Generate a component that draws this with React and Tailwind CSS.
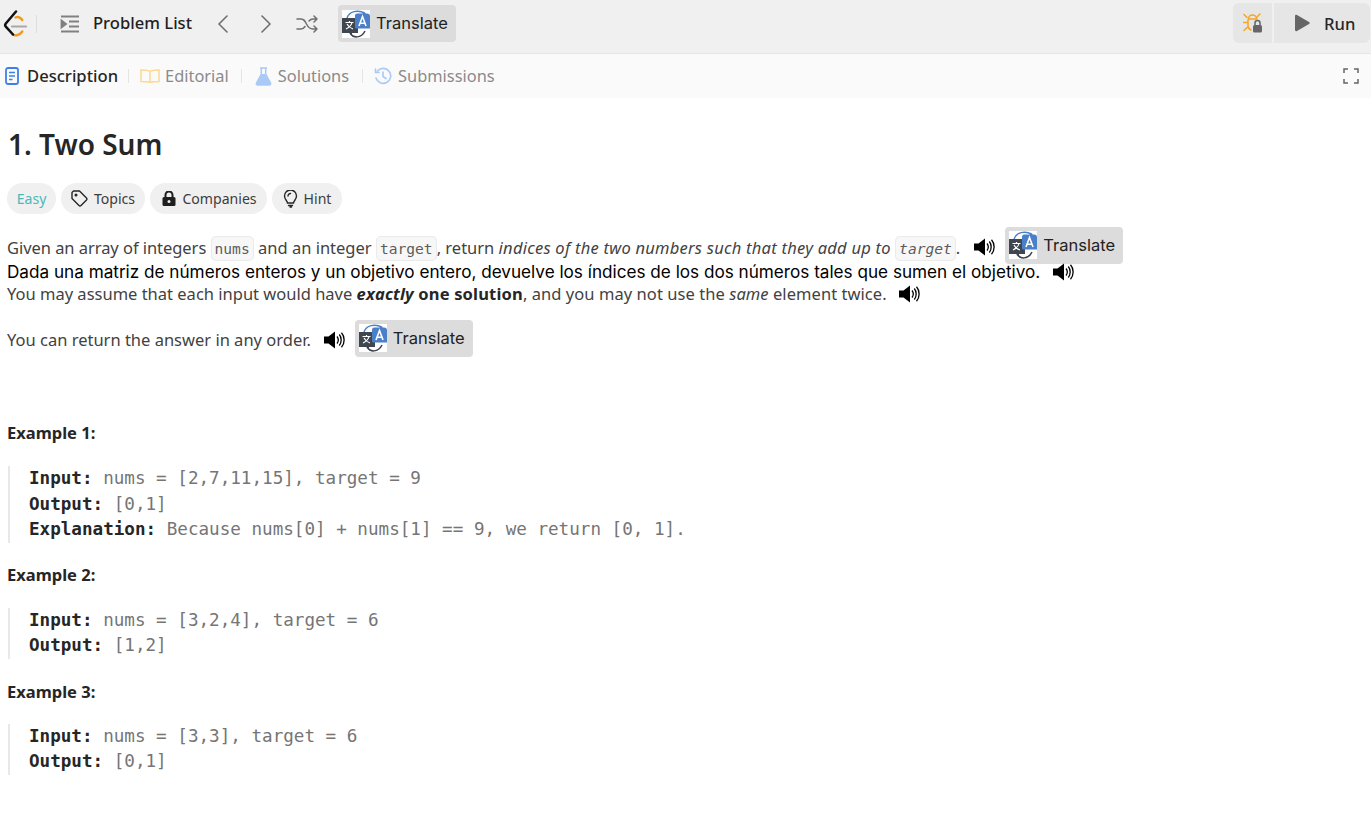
import React from "react";

const sans = "font-['Noto_Sans','Open_Sans',sans-serif]";
const inter = "font-['Inter',sans-serif]";

function TranslateIcon() {
  return (
    <svg width="28" height="28" viewBox="0 0 28 28" className="shrink-0">
      <rect width="28" height="28" fill="#fff" />
      <path d="M5 8C7 1.500 16 -1 23 3.500" fill="none" stroke="#4a7fc9" strokeWidth="1.500" />
      <path d="M21.500 1.500 24 4l-3.500.5z" fill="#4a7fc9" />
      <path d="M8 23c3 5 11 6 15-2" fill="none" stroke="#3a4049" strokeWidth="1.500" />
      <path d="M6.500 22 9.500 25l1-3.500z" fill="#3a4049" />
      <rect x="0" y="8" width="16" height="15" fill="#3f4650" />
      <path d="M15 3.500h10c2 0 3 1 3 3v12H14c-1 0-1-1-1-2V5.500c0-1 1-2 2-2z" fill="#4a7fc9" />
      <path d="M3.500 12.500h8M7.500 11v1.500M10 12.500c-.5 2.500-3 5-6 6.500M5 14c1 2 3 4 6 5" fill="none" stroke="#fff" strokeWidth="1.200" />
      <path d="M17 16 20.500 6.500 24 16M18 13.200h5" fill="none" stroke="#fff" strokeWidth="1.600" />
    </svg>
  );
}

function Translate() {
  return (
    <span className={`inline-flex h-[37px] items-center gap-[6px] rounded-[4px] bg-[#dcdcdc] pl-[4px] pr-[8px] text-[16.500px] text-[#222] ${inter}`}>
      <TranslateIcon />
      <span>Translate</span>
    </span>
  );
}

function Speaker({ className = "" }) {
  return (
    <svg width="22" height="18" viewBox="0 0 22 18" className={`inline-block shrink-0 ${className}`}>
      <path d="M1 5.500h4.500L12 .5v17l-6.500-5H1z" fill="#000" />
      <path d="M14 5.500c1.500 2 1.500 5 0 7M16.300 3.500c2.500 3 2.500 8 0 11M18.500 1.800c3.500 4 3.500 10.400 0 14.400" fill="none" stroke="#000" strokeWidth="1.300" />
    </svg>
  );
}

function Code({ children, italic }) {
  return (
    <code className={`rounded-[5px] border border-[#ebebeb] bg-[#f7f7f7] px-[3px] py-[3px] font-['DejaVu_Sans_Mono',monospace] text-[14.600px] text-[#5c5c5c] ${italic ? "italic" : ""}`}>
      {children}
    </code>
  );
}

function Tag({ children, className = "" }) {
  return (
    <span className={`flex h-[31px] items-center gap-[6px] rounded-full bg-[#f0f0f0] text-[14.100px] text-[#3d3d3d] ${className}`}>
      {children}
    </span>
  );
}

function Sep() {
  return <span className="block h-[14px] w-px bg-[#e4e4e4]" />;
}

function Pre({ lines }) {
  return (
    <div className="border-l-2 border-[#e8e8e8] pl-[19px] font-['DejaVu_Sans_Mono',monospace] text-[17.600px] leading-[25.500px] text-[#757575]">
      {lines.map(([k, v]) => (
        <div key={k} className="whitespace-pre">
          <b className="font-bold text-[#262626]">{k}</b> {v}
        </div>
      ))}
    </div>
  );
}

function ExampleTitle({ children, className = "" }) {
  return <h3 className={`-ml-[1px] text-[16.500px] font-bold leading-[24px] text-[#262626] ${className}`}>{children}</h3>;
}

export default function App() {
  return (
    <div className={`h-[819px] w-[1371px] overflow-hidden bg-white ${sans}`}>
      <header className="flex h-[54px] items-center border-b border-[#e6e6e6] bg-[#f0f0f0] pb-[6px] pr-[1px]">
        <svg width="26" height="28" viewBox="0 0 26 28" className="ml-[3px]">
          <path d="M9 16.500H23" stroke="#a8a8a8" strokeWidth="2.200" strokeLinecap="round" />
          <path d="M12.500 7.500c3-1.500 5 0 6.800 2.500" fill="none" stroke="#f09a20" strokeWidth="2.400" strokeLinecap="round" />
          <path d="M9.500 24.500c3 1.500 7 1 9.800-3" fill="none" stroke="#f09a20" strokeWidth="2.400" strokeLinecap="round" />
          <path d="M13 1.500 2.800 13.500c-.8 1-.8 2.200 0 3.200L10 24.500" fill="none" stroke="#111" strokeWidth="2.500" strokeLinecap="round" />
        </svg>
        <span className="ml-[7px] h-[18px] w-px bg-[#dedede]" />
        <svg width="20" height="18" viewBox="0 0 20 18" className="ml-[23px]" fill="none" stroke="#808080" strokeWidth="1.800">
          <path d="M1 1.500h18M9 6.500h10M9 11.500h10M1 16.500h18" />
          <path d="M1.500 5.500 6 9l-4.500 3.500z" fill="#808080" />
        </svg>
        <span className="ml-[13px] text-[16.600px] font-medium text-[#1f1f1f]">Problem List</span>
        <svg width="12" height="18" viewBox="0 0 12 18" className="ml-[25px]" fill="none" stroke="#6f6f6f" strokeWidth="1.600" strokeLinecap="round" strokeLinejoin="round"><path d="M10 1 2 9l8 8" /></svg>
        <svg width="12" height="18" viewBox="0 0 12 18" className="ml-[31px]" fill="none" stroke="#6f6f6f" strokeWidth="1.600" strokeLinecap="round" strokeLinejoin="round"><path d="m2 1 8 8-8 8" /></svg>
        <svg width="22" height="18" viewBox="0 0 22 18" className="ml-[24px]" fill="none" stroke="#6f6f6f" strokeWidth="1.500" strokeLinecap="round" strokeLinejoin="round">
          <path d="M1 4h4c3 0 4 2 5.500 5S14 14 17 14h4M1 14h4c2 0 3-1 4-2.500M13 6c1-1.200 2.200-2 4-2h4M18 1l3 3-3 3M18 11l3 3-3 3" />
        </svg>
        <span className="ml-[20px] mt-[2px]">
          <Translate />
        </span>
        <div className="ml-auto -mt-[1px] flex h-[40px] items-center gap-[2px]">
          <span className="flex h-full w-[39px] items-center justify-center rounded-l-[6px] bg-[#e6e6e6]">
            <svg width="20" height="20" viewBox="0 0 20 20">
              <g fill="none" stroke="#f5a623" strokeWidth="1.500" strokeLinecap="round">
                <path d="M5.500 6c0-2.500 2-4 4-4s4 1.500 4 4M5 7v6c0 1.500 1 3 3 4M1 1.500l3 3M17 1l-3 3M.5 9.500H4M1 17.500l3-3M6 6h8" />
              </g>
              <rect x="10" y="12" width="9" height="7.500" rx="1.500" fill="#666" />
              <path d="M12 12v-2a2.500 2.500 0 0 1 5 0v2" fill="none" stroke="#666" strokeWidth="1.500" />
            </svg>
          </span>
          <span className="flex h-full w-[96px] items-center rounded-r-[6px] bg-[#e6e6e6] pl-[20px]">
            <svg width="16" height="18" viewBox="0 0 16 18"><path d="M1 2c0-1 1-1.500 2-1l12 7c1 .5 1 1.500 0 2L3 17c-1 .5-2 0-2-1z" fill="#666" /></svg>
            <span className="ml-[14px] mt-[2px] text-[16.600px] font-medium text-[#262626]">Run</span>
          </span>
        </div>
      </header>

      <nav className="flex h-[44px] items-center bg-[#fafafa] pr-[12px] text-[16.400px] text-[#8a8a8a]">
        <svg width="14" height="18" viewBox="0 0 14 18" className="ml-[5px]" fill="none" stroke="#3f80e8" strokeWidth="1.800"><rect x="1" y="1" width="12" height="16" rx="2" /><path d="M4 5.500h6M4 9h6M4 12.500h3.500" strokeWidth="1.400" /></svg>
        <span className="ml-[8px] text-[16.600px] font-medium text-[#262626]">Description</span>
        <span className="ml-[10px]"><Sep /></span>
        <svg width="20" height="14" viewBox="0 0 20 14" className="ml-[11px]" fill="none" stroke="#fcd98e" strokeWidth="1.500"><path d="M10 2.500C8 1 4 1 1 1v11.500c3 0 7 0 9 1 2-1 6-1 9-1V1c-3 0-7 0-9 1.500zM10 2.500v11" /></svg>
        <span className="ml-[5px]">Editorial</span>
        <span className="ml-[12px]"><Sep /></span>
        <svg width="17" height="19" viewBox="0 0 17 19" className="ml-[13px]"><path d="M10 7 15.500 16c.5 1 0 2-1.500 2H3c-1.500 0-2-1-1.500-2L7 7z" fill="#a9c9f7" /><path d="M5 1h7M6.300 1v6L1.500 16c-.5 1 0 2 1.500 2h11c1.500 0 2-1 1.500-2l-4.800-9V1" fill="none" stroke="#a9c9f7" strokeWidth="1.500" /></svg>
        <span className="ml-[6px]">Solutions</span>
        <span className="ml-[13px]"><Sep /></span>
        <svg width="18" height="18" viewBox="0 0 18 18" className="ml-[11px]" fill="none" stroke="#a9c9f7" strokeWidth="1.600" strokeLinecap="round"><path d="M3.500 4A7.500 7.500 0 1 1 2 11M1.500 2v3.500H5M9 5v4.500l3 2" /></svg>
        <span className="ml-[6px]">Submissions</span>
        <svg width="16" height="16" viewBox="0 0 16 16" className="ml-auto" fill="none" stroke="#666" strokeWidth="1.500"><path d="M1 5V1h4M11 1h4v4M15 11v4h-4M5 15H1v-4" /></svg>
      </nav>

      <main className="pl-[8px]">
        <h1 className="mt-[26px] text-[28px] font-semibold leading-[40px] text-[#262626]">1. Two Sum</h1>
        <div className="mt-[19px] -ml-[1px] flex gap-[5px]">
          <Tag className="w-[49px] justify-center text-[#4db8b8]">Easy</Tag>
          <Tag className="w-[84px] justify-center">
            <svg width="17" height="17" viewBox="0 0 17 17" fill="none" stroke="#262626" strokeWidth="1.400" strokeLinejoin="round"><path d="M1 2.500 2.500 1h6l7 7c.6.6.6 1.400 0 2L10 15.500c-.6.6-1.400.6-2 0l-7-7z" /><circle cx="5" cy="5" r=".8" /></svg>
            Topics
          </Tag>
          <Tag className="w-[117px] justify-center">
            <svg width="14" height="15" viewBox="0 0 14 15" fill="#1f1f1f" className="ml-[2px]"><rect x="0.500" y="6" width="13" height="9" rx="1.500" /><path d="M3.500 6V4a3.500 3.500 0 0 1 7 0v2" fill="none" stroke="#1f1f1f" strokeWidth="2" /><circle cx="7" cy="10.500" r="1.500" fill="#f0f0f0" /></svg>
            Companies
          </Tag>
          <Tag className="w-[70px] justify-center">
            <svg width="15" height="18" viewBox="0 0 15 18" fill="none" stroke="#262626" strokeWidth="1.400" strokeLinecap="round"><path d="M4.500 13c0-2-3-3.500-3-7a6 6 0 0 1 12 0c0 3.500-3 5-3 7z" /><path d="M5.500 15.500h4M7 17h1.500M5 6a2.500 2.500 0 0 1 2.500-2.500" /></svg>
            Hint
          </Tag>
        </div>

        <div className="mt-[14px] -ml-[1px] flex h-[37px] items-center whitespace-nowrap text-[16.500px] text-[#424242]">
          <span className="pt-[3px]">
            <span className="tracking-[-0.05px]">Given an array of integers</span> <Code>nums</Code> and an integer <Code>target</Code>, return <i className="tracking-[0.25px]">indices of the two numbers such that they add up to</i> <Code italic>target</Code>.
          </span>
          <Speaker className="ml-[13px]" />
          <span className="ml-[10px]"><Translate /></span>
        </div>
        <div className={`-ml-[1px] -mt-[4px] flex h-[22px] items-center whitespace-nowrap text-[17.150px] text-black ${inter}`}>
          <span>Dada una matriz de números enteros y un objetivo entero, devuelve los índices de los dos números tales que sumen el objetivo.</span>
          <Speaker className="ml-[12px]" />
        </div>
        <div className="-ml-[1px] flex h-[22px] items-center whitespace-nowrap text-[16.500px] text-[#424242]">
          <span>
            You may assume that each input would have <b className="font-bold tracking-[0.17px] text-[#262626]"><i>exactly</i> one solution</b><span className="tracking-[0.06px]">, and you may not use the <i>same</i> element twice.</span>
          </span>
          <Speaker className="ml-[11px]" />
        </div>
        <div className="-ml-[1px] mt-[16px] flex h-[37px] items-center whitespace-nowrap text-[16.500px] text-[#424242]">
          <span className="pt-[1px]">You can return the answer in any order.</span>
          <Speaker className="ml-[12px] mt-[1px]" />
          <span className="ml-[10px]"><Translate /></span>
        </div>

        <ExampleTitle className="mt-[63px]">Example 1:</ExampleTitle>
        <div className="mt-[21px]">
          <Pre lines={[["Input:", "nums = [2,7,11,15], target = 9"], ["Output:", "[0,1]"], ["Explanation:", "Because nums[0] + nums[1] == 9, we return [0, 1]."]]} />
        </div>
        <ExampleTitle className="mt-[20px]">Example 2:</ExampleTitle>
        <div className="mt-[21px]">
          <Pre lines={[["Input:", "nums = [3,2,4], target = 6"], ["Output:", "[1,2]"]]} />
        </div>
        <ExampleTitle className="mt-[21px]">Example 3:</ExampleTitle>
        <div className="mt-[20px]">
          <Pre lines={[["Input:", "nums = [3,3], target = 6"], ["Output:", "[0,1]"]]} />
        </div>
      </main>
    </div>
  );
}
